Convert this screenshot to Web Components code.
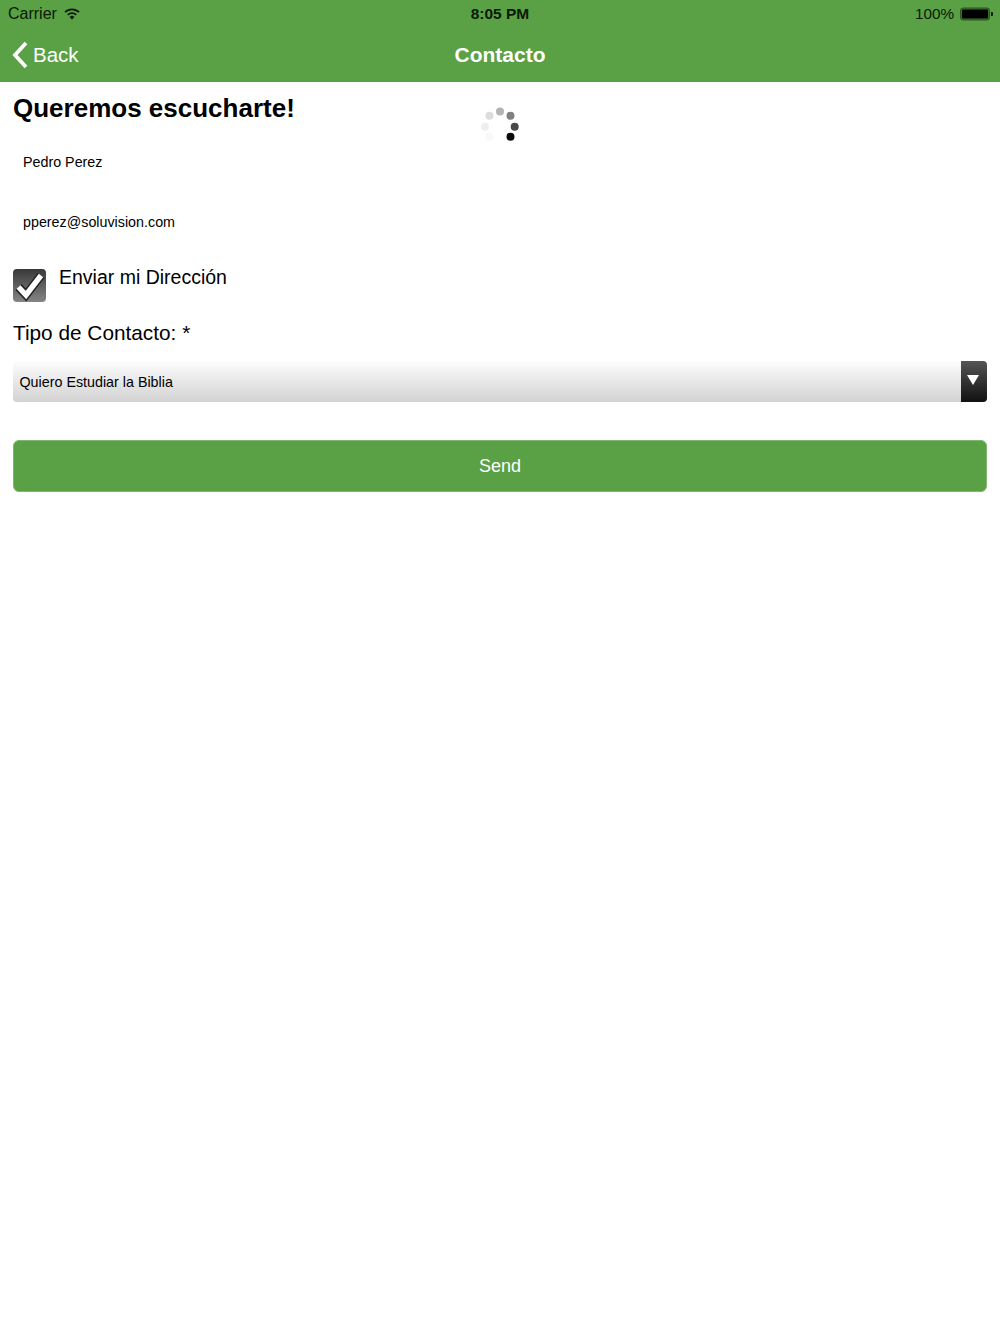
<!DOCTYPE html>
<html>
<head>
<meta charset="utf-8">
<title>Contacto</title>
<style>
    html,body{
        margin:0;
        padding:0;
        background:#fff;
        font-family:"Liberation Sans",Arial,sans-serif;
        color:#000;
    }
</style>
</head>
<body>
<app-header otsikko="Contacto"></app-header>
<contact-form></contact-form>

<script>
const headerTemplate=document.createElement('template');
headerTemplate.innerHTML=`
<style>
    :host{
        display:block;
        background-color:#5aa044;
        height:82px;
    }
    .status{
        display:grid;
        grid-template-columns:1fr auto 1fr;
        align-items:center;
        height:28px;
        padding:0 7px;
        font-size:16px;
        color:#0a1a05;
    }
    .left{
        display:flex;
        align-items:center;
        gap:7px;
        padding-left:1px;
    }
    .right{
        display:flex;
        align-items:center;
        justify-content:flex-end;
        gap:6px;
    }
    .right span{
        font-size:15.3px;
        padding-right:0;
    }
    .time{
        font-weight:bold;
        font-size:15.5px;
    }
    .nav{
        display:grid;
        grid-template-columns:1fr auto 1fr;
        align-items:center;
        height:54px;
        padding:0 12px;
        color:#fff;
    }
    .back{
        display:flex;
        align-items:center;
        gap:5px;
        font-size:20.5px;
    }
    h1{
        margin:0;
        font-size:21px;
        font-weight:bold;
    }
    svg{
        display:block;
    }
</style>
<div class="status">
    <div class="left">
        <span>Carrier</span>
        <svg width="16" height="12" viewBox="0 0 16 12">
            <path d="M1 4.2a10 10 0 0 1 14 0" fill="none" stroke="#0a1a05" stroke-width="1.8"/>
            <path d="M3.8 6.9a6 6 0 0 1 8.4 0" fill="none" stroke="#0a1a05" stroke-width="1.8"/>
            <path d="M8 11.6 5.6 9a3.4 3.4 0 0 1 4.8 0z" fill="#0a1a05"/>
        </svg>
    </div>
    <span class="time">8:05 PM</span>
    <div class="right">
        <span>100%</span>
        <svg width="33" height="14" viewBox="0 0 33 14">
            <rect x="0.5" y="1" width="29" height="12" rx="2.5" fill="#3c6f2e" stroke="#2a5420"/>
            <rect x="2" y="2.5" width="26" height="9" rx="1" fill="#000"/>
            <path d="M31 5h1a1 1 0 0 1 1 1v2a1 1 0 0 1-1 1h-1z" fill="#0a1a05"/>
        </svg>
    </div>
</div>
<div class="nav">
    <div class="back">
        <svg width="16" height="28" viewBox="0 0 16 28">
            <path d="M14 2 3 14 14 26" fill="none" stroke="#fff" stroke-width="3.8"/>
        </svg>
        <span>Back</span>
    </div>
    <h1 id="otsikko"></h1>
</div>
`;

class AppHeader extends HTMLElement{
    #shadow;
    constructor(){
        super();
        this.#shadow=this.attachShadow({mode:'open'});
        this.#shadow.appendChild(headerTemplate.content.cloneNode(true));
    }
    connectedCallback(){
        this.#shadow.getElementById('otsikko').textContent=this.getAttribute('otsikko');
    }
}
customElements.define('app-header',AppHeader);

const spinnerTemplate=document.createElement('template');
spinnerTemplate.innerHTML=`
<style>
    :host{
        display:block;
        position:absolute;
        left:480px;
        top:106px;
        width:40px;
        height:40px;
    }
</style>
<svg width="40" height="40" viewBox="0 0 40 40">
    <circle cx="20" cy="5.5" r="4" fill="#b4b4b4"/>
    <circle cx="30.5" cy="9.8" r="4" fill="#808080"/>
    <circle cx="34.7" cy="20.7" r="4" fill="#484848"/>
    <circle cx="30.5" cy="30.7" r="4" fill="#0a0a0a"/>
    <circle cx="9.5" cy="30.7" r="4" fill="#f8f8f8"/>
    <circle cx="5" cy="20.7" r="4" fill="#eee"/>
    <circle cx="9.5" cy="9.8" r="4" fill="#dcdcdc"/>
</svg>
`;

class LoadSpinner extends HTMLElement{
    constructor(){
        super();
        this.attachShadow({mode:'open'}).appendChild(spinnerTemplate.content.cloneNode(true));
    }
}
customElements.define('load-spinner',LoadSpinner);

const fieldTemplate=document.createElement('template');
fieldTemplate.innerHTML=`
<style>
    :host{
        display:block;
        height:60px;
        box-sizing:border-box;
        padding:0 10px;
        font-size:14.3px;
        line-height:60px;
    }
</style>
<slot></slot>
`;

class TextField extends HTMLElement{
    constructor(){
        super();
        this.attachShadow({mode:'open'}).appendChild(fieldTemplate.content.cloneNode(true));
    }
}
customElements.define('text-field',TextField);

const checkTemplate=document.createElement('template');
checkTemplate.innerHTML=`
<style>
    :host{
        display:flex;
        gap:13px;
        font-size:19.5px;
    }
    .box{
        width:33px;
        height:33px;
        border-radius:4px;
        background:linear-gradient(#383838,#858585);
    }
    .label{
        line-height:24px;
        margin-top:-4px;
    }
    svg{
        display:block;
    }
</style>
<div class="box">
    <svg width="33" height="33" viewBox="0 0 33 33">
        <path d="M5.5 18 13 26 28 6.5" fill="none" stroke="#222" stroke-width="8.5"/>
        <path d="M5.5 18 13 26 28 6.5" fill="none" stroke="#fff" stroke-width="5.4"/>
    </svg>
</div>
<span class="label"><slot></slot></span>
`;

class CheckRow extends HTMLElement{
    constructor(){
        super();
        this.attachShadow({mode:'open'}).appendChild(checkTemplate.content.cloneNode(true));
    }
}
customElements.define('check-row',CheckRow);

const selectTemplate=document.createElement('template');
selectTemplate.innerHTML=`
<style>
    :host{
        display:flex;
        height:41px;
        border-radius:4px;
        overflow:hidden;
        font-size:14.3px;
        background:linear-gradient(#fdfdfd,#d2d2d2);
    }
    .value{
        flex:1;
        padding-left:6.5px;
        line-height:42px;
    }
    .arrow{
        width:26px;
        display:flex;
        justify-content:center;
        padding:14px 2px 0 0;
        box-sizing:border-box;
        background:linear-gradient(#555,#111);
    }
</style>
<span class="value"><slot></slot></span>
<div class="arrow">
    <svg width="12" height="10" viewBox="0 0 12 10"><path d="M0 0h12L6 10z" fill="#fff"/></svg>
</div>
`;

class SelectBox extends HTMLElement{
    constructor(){
        super();
        this.attachShadow({mode:'open'}).appendChild(selectTemplate.content.cloneNode(true));
    }
}
customElements.define('select-box',SelectBox);

const buttonTemplate=document.createElement('template');
buttonTemplate.innerHTML=`
<style>
    :host{
        display:block;
        height:52px;
        box-sizing:border-box;
        border:1px solid #7fb56e;
        border-radius:6px;
        background-color:#5aa044;
        color:#fff;
        font-size:18px;
        line-height:50px;
        text-align:center;
    }
</style>
<slot></slot>
`;

class SendButton extends HTMLElement{
    constructor(){
        super();
        this.attachShadow({mode:'open'}).appendChild(buttonTemplate.content.cloneNode(true));
    }
}
customElements.define('send-button',SendButton);

const formTemplate=document.createElement('template');
formTemplate.innerHTML=`
<style>
    :host{
        display:block;
        padding:12px 13px 0;
    }
    h2{
        margin:0;
        font-size:26px;
        line-height:29px;
        font-weight:bold;
    }
    .fields{
        margin-top:9px;
    }
    check-row{
        margin-top:17px;
    }
    .type{
        margin-top:19px;
        font-size:20.8px;
        line-height:24px;
    }
    select-box{
        margin-top:16px;
    }
    send-button{
        margin-top:38px;
    }
</style>
<h2>Queremos escucharte!</h2>
<load-spinner></load-spinner>
<div class="fields">
    <text-field>Pedro Perez</text-field>
    <text-field>pperez@soluvision.com</text-field>
</div>
<check-row>Enviar mi Dirección</check-row>
<div class="type">Tipo de Contacto: *</div>
<select-box>Quiero Estudiar la Biblia</select-box>
<send-button>Send</send-button>
`;

class ContactForm extends HTMLElement{
    constructor(){
        super();
        this.attachShadow({mode:'open'}).appendChild(formTemplate.content.cloneNode(true));
    }
}
customElements.define('contact-form',ContactForm);
</script>
</body>
</html>
